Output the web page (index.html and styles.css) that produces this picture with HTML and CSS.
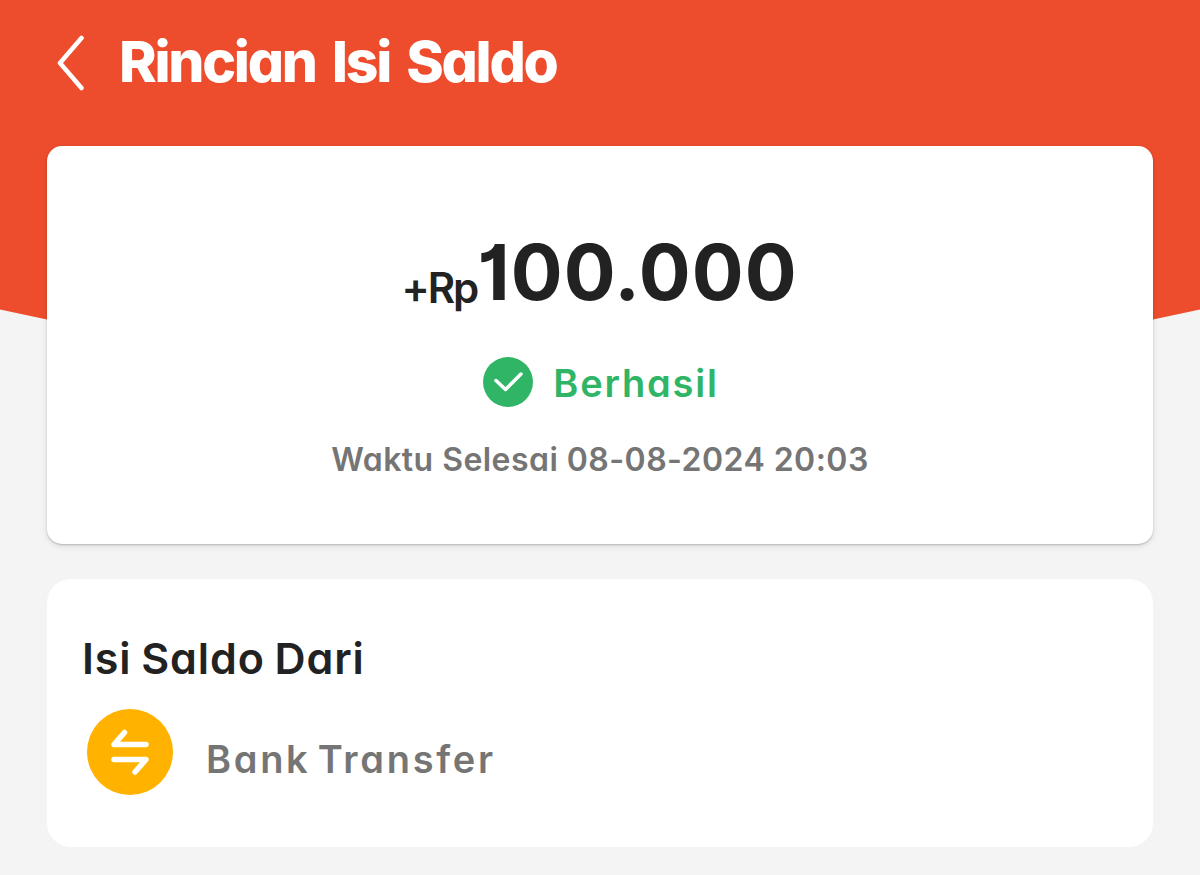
FILE: index.html
```html
<!DOCTYPE html>
<html lang="id">
<head>
  <meta charset="UTF-8">
  <title>Rincian Isi Saldo</title>
  <link rel="stylesheet" href="styles.css">
</head>
<body>
<header class="hero">
  <div class="nav">
    <svg class="back" viewBox="0 0 28 56"><path d="M25.5 3 L4 28 L25.5 53"/></svg>
    <h1>Rincian Isi Saldo</h1>
  </div>
</header>

<main class="content">
  <section class="card summary">
    <div class="amount"><span class="currency">+Rp</span><span class="value">100.000</span></div>
    <div class="status">
      <svg class="check" viewBox="0 0 50 50"><circle cx="25" cy="25" r="25"/><path d="M13 23.5 L22.5 32.5 L38 17"/></svg>
      <span>Berhasil</span>
    </div>
    <div class="time">Waktu Selesai 08-08-2024 20:03</div>
  </section>

  <section class="card source">
    <h2>Isi Saldo Dari</h2>
    <div class="method">
      <svg class="transfer" viewBox="0 0 86 86">
        <circle cx="43" cy="43" r="43"/>
        <path d="M59 35.5 H27 L37.5 23.5"/>
        <path d="M27 50.5 H59 L48 63"/>
      </svg>
      <span>Bank Transfer</span>
    </div>
  </section>
</main>
</body>
</html>
```
FILE: styles.css
```css
* { box-sizing: border-box; }
body { margin: 0; background: #f4f4f4; font-family: Inter, "Liberation Sans", sans-serif; font-feature-settings: "cv11"; color: #222; white-space: nowrap; }
h1, h2 { margin: 0; }
svg { display: block; flex: none; fill: none; stroke: #fff; stroke-linecap: round; stroke-linejoin: round; }

.hero {
  height: 340px; padding: 31px 56px; background: #ee4d2d;
  clip-path: polygon(0 0, 100% 0, 100% 309.5px, 1153px 319.5px, 50% 100%, 47px 319.5px, 0 309.5px);
}
.nav { display: flex; align-items: center; gap: 35px; color: #fff; }
.back { width: 28px; height: 56px; margin-top: 2px; stroke-width: 4.5; }
h1 { font-size: 57px; line-height: 62px; font-weight: 800; letter-spacing: -2.3px; word-spacing: 6px; }

.content { position: relative; margin-top: -194px; padding: 0 47px; display: flex; flex-direction: column; gap: 35px; }
.card { background: #fff; }

.summary {
  height: 398px; padding-top: 86px; border-radius: 15px;
  box-shadow: 0 1px 2px rgba(0,0,0,0.2), 0 2px 7px rgba(0,0,0,0.1);
  display: flex; flex-direction: column; align-items: center;
}
.amount { display: flex; align-items: center; height: 80px; }
.currency { font-size: 42px; font-weight: 600; letter-spacing: -2px; margin: 31px 0 0 0; }
.value { font-size: 77px; line-height: 80px; font-weight: 700; letter-spacing: 1px; margin-right: 1px; font-feature-settings: "cv11", "cv01"; }
.status { display: flex; align-items: center; gap: 20px; height: 50px; margin-top: 45px; color: #30b566; font-size: 38px; line-height: 50px; font-weight: 600; letter-spacing: 1.8px; }
.status span { margin: 2px -2px 0 0; }
.check { width: 50px; height: 50px; stroke-width: 3.5; }
.check circle { fill: #30b566; stroke: none; }
.time { margin-top: 33px; color: #757575; font-size: 32px; line-height: 40px; font-weight: 600; letter-spacing: 0.45px; }

.source { height: 268px; padding: 54px 35px 0; border-radius: 24px; }
h2 { font-size: 43px; line-height: 50px; font-weight: 600; letter-spacing: 0.9px; word-spacing: -2px; }
.method { display: flex; align-items: center; gap: 33px; margin: 26px 0 0 5px; color: #757575; font-size: 38px; font-weight: 600; letter-spacing: 2.7px; word-spacing: -5px; }
.method span { margin-top: 13px; }
.transfer { width: 86px; height: 86px; stroke-width: 5.5; }
.transfer circle { fill: #ffb300; stroke: none; }
```
